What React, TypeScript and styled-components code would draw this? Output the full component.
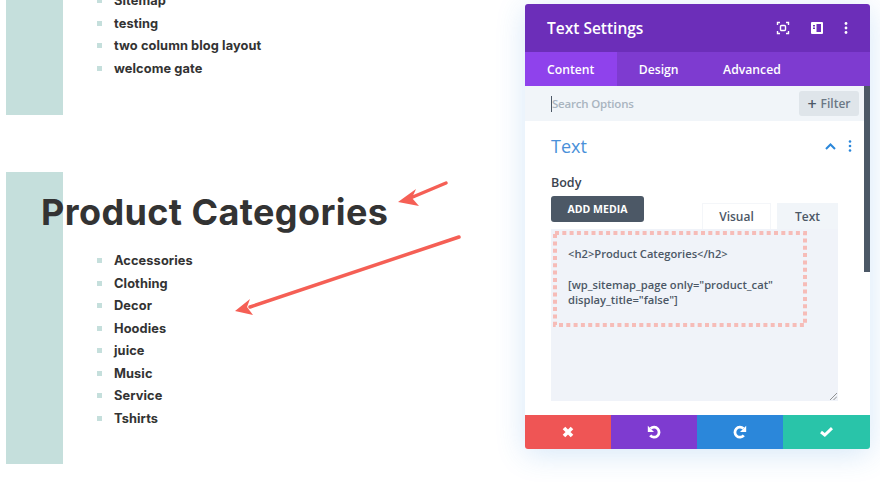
import React, {FC} from 'react'
import styled, {createGlobalStyle} from 'styled-components'

const GlobalStyle = createGlobalStyle`
  html, body {
    margin: 0;
    padding: 0;
    background: #fff;
  }
`;

const sitemapItems = ['Sitemap', 'testing', 'two column blog layout', 'welcome gate'];
const categoryItems = ['Accessories', 'Clothing', 'Decor', 'Hoodies', 'juice', 'Music', 'Service', 'Tshirts'];

const App: FC = () => {
    return (
        <Page>
            <GlobalStyle />
            <Content>
                <Block $height={126} $paddingTop={0.6}>
                    <List>
                        {sitemapItems.map(item => <Item key={item}>{item}</Item>)}
                    </List>
                </Block>
                <Block $height={292} $paddingTop={18.3}>
                    <Heading>Product Categories</Heading>
                    <List>
                        {categoryItems.map(item => <Item key={item}>{item}</Item>)}
                    </List>
                </Block>
                <Arrows width="525" height="482" viewBox="0 0 525 482">
                    <path d="M446 183 L408 199" stroke="#f55f55" strokeWidth="3.5" strokeLinecap="round" />
                    <path d="M398 202 L416 189 L412 198 L419 206 Z" fill="#f55f55" />
                    <path d="M459 237 L250 307" stroke="#f55f55" strokeWidth="3.5" strokeLinecap="round" />
                    <path d="M235 311 L250 299 L247 307 L253 315 Z" fill="#f55f55" />
                </Arrows>
            </Content>
            <Panel>
                <PanelHeader>
                    <PanelTitle>Text Settings</PanelTitle>
                    <HeaderIcons>
                        <svg width="14" height="14" viewBox="0 0 14 14" fill="none" stroke="#fff" strokeWidth="1.4">
                            <path d="M1.5 4 V1.5 H4 M10 1.5 H12.5 V4 M12.5 10 V12.5 H10 M4 12.5 H1.5 V10" />
                            <rect x="4.5" y="4.5" width="5" height="5" rx="1" />
                        </svg>
                        <svg width="12" height="12" viewBox="0 0 12 12">
                            <path fillRule="evenodd" fill="#fff" d="M1 0 H11 A1 1 0 0 1 12 1 V11 A1 1 0 0 1 11 12 H1 A1 1 0 0 1 0 11 V1 A1 1 0 0 1 1 0 Z M5.5 2 V10 H10 V2 Z M2 3 V4.5 H4 V3 Z M2 5.5 V7 H4 V5.5 Z" />
                        </svg>
                        <svg width="4" height="12" viewBox="0 0 4 12" fill="#fff">
                            <circle cx="2" cy="1.5" r="1.4" />
                            <circle cx="2" cy="6" r="1.4" />
                            <circle cx="2" cy="10.5" r="1.4" />
                        </svg>
                    </HeaderIcons>
                </PanelHeader>
                <Tabs>
                    <Tab $active>Content</Tab>
                    <Tab>Design</Tab>
                    <Tab>Advanced</Tab>
                </Tabs>
                <SearchBar>
                    <SearchText>Search Options</SearchText>
                    <FilterButton><span>+</span> Filter</FilterButton>
                </SearchBar>
                <PanelBody>
                    <Scrollbar />
                    <GroupHeader>
                        <GroupTitle>Text</GroupTitle>
                        <svg width="11" height="7" viewBox="0 0 11 7" fill="none" stroke="#2b87da" strokeWidth="2">
                            <path d="M1 6 L5.5 1.5 L10 6" />
                        </svg>
                        <svg width="4" height="12" viewBox="0 0 4 12" fill="#2b87da">
                            <circle cx="2" cy="1.5" r="1.3" />
                            <circle cx="2" cy="6" r="1.3" />
                            <circle cx="2" cy="10.5" r="1.3" />
                        </svg>
                    </GroupHeader>
                    <FieldLabel>Body</FieldLabel>
                    <EditorBar>
                        <MediaButton>ADD MEDIA</MediaButton>
                        <EditorTabs>
                            <EditorTab>Visual</EditorTab>
                            <EditorTab $selected>Text</EditorTab>
                        </EditorTabs>
                    </EditorBar>
                    <Editor>
                        <EditorLine>&lt;h2&gt;Product Categories&lt;/h2&gt;</EditorLine>
                        <EditorLine>&nbsp;</EditorLine>
                        <EditorLine>[wp_sitemap_page only="product_cat"</EditorLine>
                        <EditorLine>display_title="false"]</EditorLine>
                        <DottedFrame width="254" height="96" viewBox="0 0 254 96" fill="none">
                            <rect x="2" y="2" width="250" height="92" stroke="#f6bcb8" strokeWidth="4" strokeDasharray="4 3.3" />
                        </DottedFrame>
                        <ResizeGrip width="7" height="7" viewBox="0 0 7 7" stroke="#777" strokeWidth="0.8">
                            <path d="M0 7 L7 0 M3.5 7 L7 3.5" />
                        </ResizeGrip>
                    </Editor>
                </PanelBody>
                <Footer>
                    <FooterButton $color="#ef5555">
                        <svg width="12" height="12" viewBox="0 0 12 12" fill="none" stroke="#fff" strokeWidth="3.6">
                            <path d="M2 2 L10 10 M10 2 L2 10" />
                        </svg>
                    </FooterButton>
                    <FooterButton $color="#7e3bd0">
                        <svg width="14" height="14" viewBox="0 0 14 14" fill="none" stroke="#fff" strokeWidth="2.8">
                            <path d="M3.6 3.6 A5 5 0 1 1 3.2 10.4" />
                            <path d="M0.8 0.8 V7 H7 Z" fill="#fff" stroke="none" />
                        </svg>
                    </FooterButton>
                    <FooterButton $color="#2b87da">
                        <svg width="14" height="14" viewBox="0 0 14 14" fill="none" stroke="#fff" strokeWidth="2.8">
                            <path d="M10.4 3.6 A5 5 0 1 0 10.8 10.4" />
                            <path d="M13.2 0.8 V7 H7 Z" fill="#fff" stroke="none" />
                        </svg>
                    </FooterButton>
                    <FooterButton $color="#29c4a9">
                        <svg width="13" height="10" viewBox="0 0 13 10" fill="none" stroke="#fff" strokeWidth="3">
                            <path d="M1 5 L4.8 8 L12 1.2" />
                        </svg>
                    </FooterButton>
                </Footer>
            </Panel>
        </Page>
    )
};

export default App;


const Page = styled.div`
  width: 880px;
  height: 482px;
  display: flex;
  overflow: hidden;
  background: #fff;
`;

const Content = styled.main`
  position: relative;
  width: 525px;
  flex-shrink: 0;
  margin-top: -11px;
  display: flex;
  flex-direction: column;
  gap: 57px;
  font-family: Inter, "Liberation Sans", sans-serif;
  color: #333;
`;

const Block = styled.section<{$height: number; $paddingTop: number}>`
  height: ${p => p.$height}px;
  box-sizing: border-box;
  padding-top: ${p => p.$paddingTop}px;
  background: linear-gradient(#c5dfdc, #c5dfdc) 6px 0 / 57px 100% no-repeat;
`;

const Heading = styled.h2`
  margin: 0 0 15px 41px;
  font-size: 36px;
  line-height: 44px;
  font-weight: 700;
  letter-spacing: 0.4px;
  white-space: nowrap;
`;

const List = styled.ul`
  margin: 0;
  padding: 0 0 0 97px;
  list-style: none;
`;

const Item = styled.li`
  display: flex;
  align-items: center;
  gap: 12px;
  height: 22.5px;
  font-size: 12.8px;
  font-weight: 700;
  letter-spacing: 0.1px;
  white-space: nowrap;

  &::before {
    content: '';
    width: 5px;
    height: 5px;
    background: #c5dfdc;
  }
`;

const Arrows = styled.svg`
  position: absolute;
  left: 0;
  top: 11px;
  pointer-events: none;
`;

const Panel = styled.aside`
  width: 345px;
  height: 445px;
  margin-top: 4px;
  flex-shrink: 0;
  display: flex;
  flex-direction: column;
  border-radius: 3px;
  background: #fff;
  box-shadow: 0 5px 30px rgba(43, 135, 218, 0.2);
  font-family: "Open Sans", sans-serif;
  overflow: hidden;
`;

const PanelHeader = styled.header`
  height: 48px;
  flex-shrink: 0;
  display: flex;
  align-items: center;
  justify-content: space-between;
  padding: 0 22px;
  background: #6c2eb9;
`;

const PanelTitle = styled.h1`
  margin: 0;
  font-size: 15.5px;
  font-weight: 600;
  color: #fff;
`;

const HeaderIcons = styled.div`
  display: flex;
  align-items: center;
  gap: 21px;
`;

const Tabs = styled.nav`
  height: 34px;
  flex-shrink: 0;
  display: flex;
  background: #7e3bd0;
`;

const Tab = styled.div<{$active?: boolean}>`
  display: flex;
  align-items: center;
  padding: 0 22.5px 0 22px;
  font-size: 12.2px;
  font-weight: 600;
  color: #fff;
  background: ${p => (p.$active ? '#8f42ec' : 'transparent')};
`;

const SearchBar = styled.div`
  height: 35px;
  flex-shrink: 0;
  display: flex;
  align-items: center;
  justify-content: space-between;
  padding: 0 11px 0 26px;
  background: #f1f5f9;
`;

const SearchText = styled.div`
  border-left: 1px solid #4c5866;
  line-height: 16px;
  font-size: 11.5px;
  font-weight: 600;
  letter-spacing: -0.2px;
  color: #a9b4c0;
`;

const FilterButton = styled.div`
  width: 60px;
  height: 25px;
  display: flex;
  align-items: center;
  justify-content: center;
  gap: 4px;
  border-radius: 3px;
  background: #dfe5ea;
  font-size: 12px;
  font-weight: 600;
  color: #6b7885;

  span {
    font-size: 16px;
    line-height: 16px;
    color: #4c5866;
  }
`;

const PanelBody = styled.div`
  position: relative;
  flex: 1;
  padding: 0 32px 0 26px;
`;

const Scrollbar = styled.div`
  position: absolute;
  right: 0;
  top: -35px;
  width: 6px;
  height: 186px;
  background: #4c5866;
`;

const GroupHeader = styled.div`
  height: 50px;
  margin-right: -14px;
  display: flex;
  align-items: center;
  gap: 12px;
`;

const GroupTitle = styled.h3`
  margin: 0 auto 0 0;
  font-size: 18px;
  font-weight: 400;
  color: #4a90d9;
`;

const FieldLabel = styled.div`
  height: 25px;
  line-height: 24px;
  font-size: 12.5px;
  font-weight: 600;
  color: #3b4450;
`;

const EditorBar = styled.div`
  height: 33px;
  display: flex;
  align-items: flex-start;
  justify-content: space-between;
`;

const MediaButton = styled.button`
  width: 93px;
  height: 26px;
  padding: 0;
  border: none;
  border-radius: 3px;
  background: #4c5866;
  font-family: inherit;
  font-size: 10.5px;
  font-weight: 700;
  color: #fff;
`;

const EditorTabs = styled.div`
  margin-top: 7px;
  display: flex;
  gap: 6px;
`;

const EditorTab = styled.div<{$selected?: boolean}>`
  width: ${p => (p.$selected ? 61 : 69)}px;
  height: 26px;
  display: flex;
  align-items: center;
  justify-content: center;
  box-sizing: border-box;
  font-size: 12px;
  font-weight: 600;
  color: #4c5866;
  background: ${p => (p.$selected ? '#f1f5f9' : '#fff')};
  border: ${p => (p.$selected ? 'none' : '1px solid #f4f6f9')};
  border-bottom: none;
`;

const Editor = styled.div`
  position: relative;
  height: 172px;
  box-sizing: border-box;
  padding: 17px 17px 0;
  background: #f0f3f9;
`;

const EditorLine = styled.div`
  height: 15.4px;
  line-height: 15.4px;
  font-size: 11.2px;
  font-weight: 600;
  color: #4c5866;
  white-space: nowrap;
`;

const DottedFrame = styled.svg`
  position: absolute;
  left: 2px;
  top: 2px;
`;

const ResizeGrip = styled.svg`
  position: absolute;
  right: 1px;
  bottom: 1px;
`;

const Footer = styled.footer`
  height: 34px;
  flex-shrink: 0;
  display: grid;
  grid-template-columns: repeat(3, 86px) 1fr;
`;

const FooterButton = styled.div<{$color: string}>`
  display: flex;
  align-items: center;
  justify-content: center;
  background: ${p => p.$color};
`;
